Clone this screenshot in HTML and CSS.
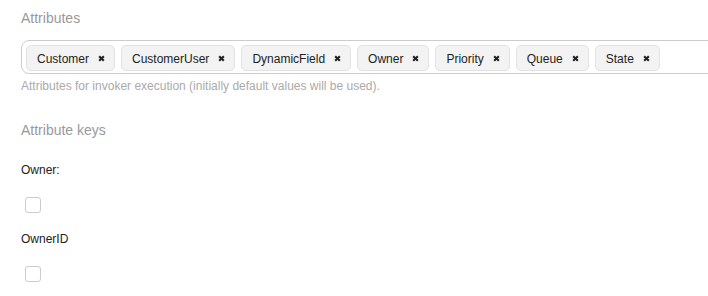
FILE: index.html
```html
<!DOCTYPE html>
<html lang="en">
<head>
    <meta charset="UTF-8">
    <meta name="viewport" content="width=device-width, initial-scale=1.0">
    <title>Invoker attributes</title>
    <link rel="stylesheet" href="styles.css">
</head>
<body>
    <main class="invoker">
        <h2 class="section-title">Attributes</h2>
        <div class="tag-box">
            <span class="tag">Customer <svg class="remove" viewBox="0 0 6 6"><path d="M1 1L5 5M5 1L1 5"/></svg></span>
            <span class="tag">CustomerUser <svg class="remove" viewBox="0 0 6 6"><path d="M1 1L5 5M5 1L1 5"/></svg></span>
            <span class="tag">DynamicField <svg class="remove" viewBox="0 0 6 6"><path d="M1 1L5 5M5 1L1 5"/></svg></span>
            <span class="tag">Owner <svg class="remove" viewBox="0 0 6 6"><path d="M1 1L5 5M5 1L1 5"/></svg></span>
            <span class="tag">Priority <svg class="remove" viewBox="0 0 6 6"><path d="M1 1L5 5M5 1L1 5"/></svg></span>
            <span class="tag">Queue <svg class="remove" viewBox="0 0 6 6"><path d="M1 1L5 5M5 1L1 5"/></svg></span>
            <span class="tag">State <svg class="remove" viewBox="0 0 6 6"><path d="M1 1L5 5M5 1L1 5"/></svg></span>
        </div>
        <p class="help">Attributes for invoker execution (initially default values will be used).</p>

        <h2 class="section-title keys-title">Attribute keys</h2>
        <label class="key-label">Owner:</label>
        <span class="checkbox"></span>
        <label class="key-label">OwnerID</label>
        <span class="checkbox"></span>
    </main>
</body>
</html>
```

FILE: styles.css
```css
body {
    margin: 0;
    font-family: "Liberation Sans", Arial, sans-serif;
    background-color: #fff;
    overflow: hidden;
}
.invoker {
    padding: 10px 0 0 21px;
}
.section-title {
    margin: 0 0 14px;
    font-size: 14px;
    line-height: 16px;
    font-weight: normal;
    color: #999;
}
.tag-box {
    display: flex;
    gap: 6px;
    width: 700px;
    padding: 4px 4px 2px;
    border: 1px solid #ccc;
    border-radius: 8px;
}
.tag {
    display: flex;
    align-items: center;
    flex-shrink: 0;
    height: 26px;
    box-sizing: border-box;
    padding: 1px 9px 0 10px;
    font-size: 12px;
    color: #222;
    background-color: #f3f3f3;
    border: 1px solid #e2e2e2;
    border-radius: 5px;
}
.remove {
    width: 7px;
    height: 7px;
    margin-left: 9px;
    stroke: #222;
    stroke-width: 1.8;
}
.help {
    margin: 5px 0 0;
    font-size: 12px;
    line-height: 15px;
    color: #aaa;
}
.keys-title {
    margin-top: 28px;
    margin-bottom: 0;
}
.key-label {
    display: block;
    margin-top: 25px;
    font-size: 12px;
    line-height: 15px;
    color: #222;
}
.checkbox + .key-label {
    margin-top: 19px;
}
.checkbox {
    display: block;
    width: 16px;
    height: 16px;
    box-sizing: border-box;
    margin: 19px 0 0 4px;
    border: 1px solid #ccc;
    border-radius: 3px;
}
```
